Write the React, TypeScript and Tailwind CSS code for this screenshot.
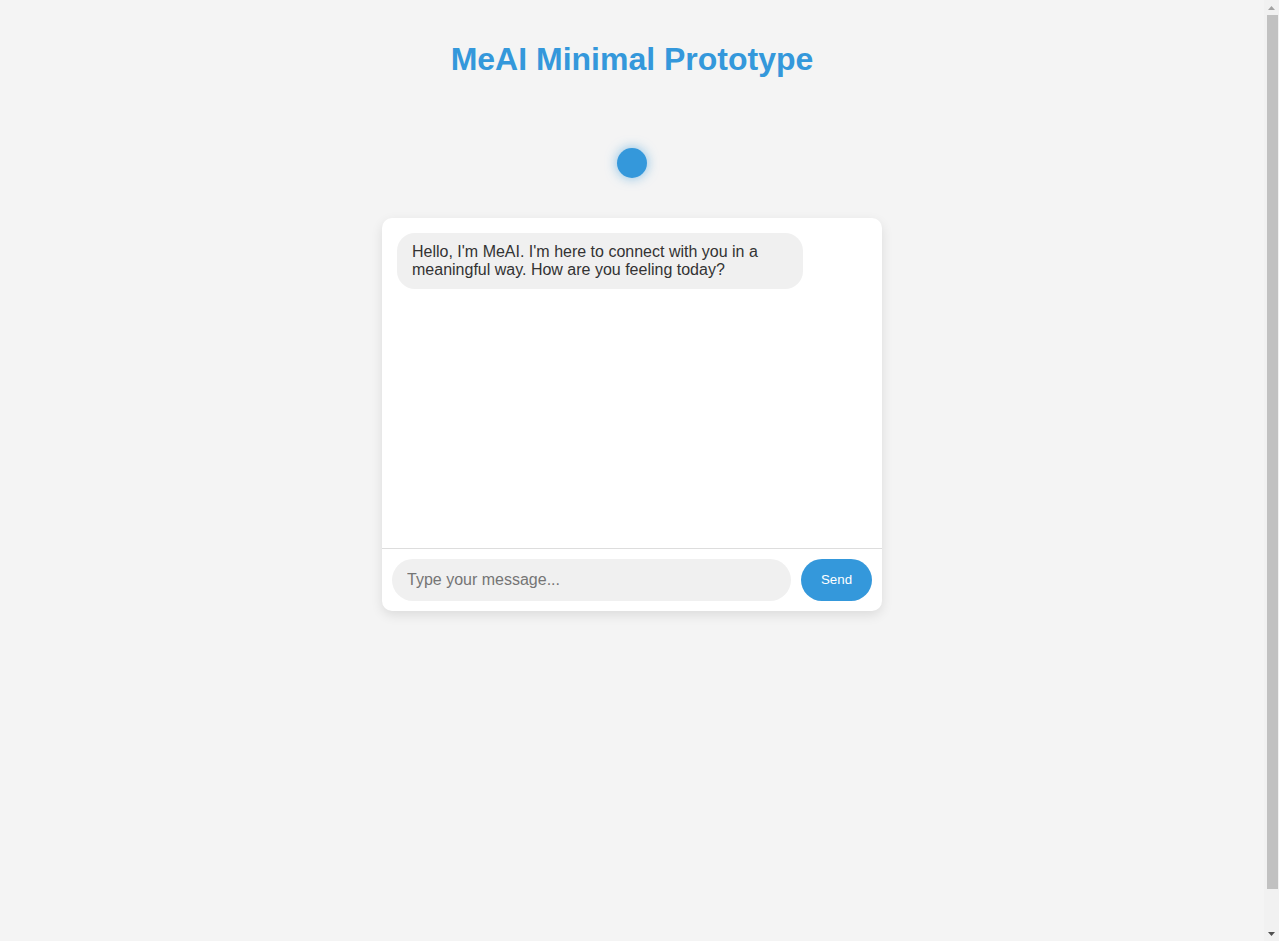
import { useState } from "react";

type Msg = { from: "ai" | "user"; text: string };

function ScrollTrack() {
  // static look of the page scrollbar seen in the screenshot
  return (
    <div className="w-[15px] h-screen shrink-0 bg-[#f1f1f1] flex flex-col items-center">
      <div className="h-[15px] flex items-center justify-center">
        <svg width="7" height="4" viewBox="0 0 7 4">
          <path d="M3.5 0 L7 4 L0 4 Z" fill="#a3a3a3" />
        </svg>
      </div>
      <div className="w-[11px] h-[874px] ml-[1px] bg-[#c1c1c1]" />
      <div className="flex-1" />
      <div className="h-[15px] flex items-center justify-center">
        <svg width="7" height="4" viewBox="0 0 7 4">
          <path d="M0 0 L7 0 L3.5 4 Z" fill="#505050" />
        </svg>
      </div>
    </div>
  );
}

export default function App() {
  const [messages, setMessages] = useState<Msg[]>([
    {
      from: "ai",
      text: "Hello, I'm MeAI. I'm here to connect with you in a meaningful way. How are you feeling today?",
    },
  ]);
  const [draft, setDraft] = useState("");

  const send = () => {
    if (!draft.trim()) return;
    setMessages([...messages, { from: "user", text: draft }]);
    setDraft("");
  };

  return (
    <div className="flex h-screen overflow-hidden bg-[#f4f4f4]">
      <div className="flex-1 h-screen overflow-y-auto">
        <div className="box-content min-h-screen p-5 flex flex-col items-center font-['Liberation_Sans',Arial,sans-serif] text-[#333]">
          <h1 className="my-[21.44px] text-[32px] leading-[36.8px] font-bold text-[#3498db]">
            MeAI Minimal Prototype
          </h1>

          <div className="mt-[48px] mb-[40px] w-[30px] h-[30px] rounded-full bg-[#3498db] shadow-[0_0_12px_rgba(52,152,219,0.6)]" />

          <div className="w-[500px] bg-white rounded-[10px] shadow-[0_4px_12px_rgba(0,0,0,0.1)] flex flex-col overflow-hidden">
            <div className="h-[330px] p-[15px] overflow-y-auto flex flex-col gap-2.5">
              {messages.map((m, i) => (
                <div
                  key={i}
                  className={
                    m.from === "ai"
                      ? "self-start box-content max-w-[376px] px-[15px] py-[10px] rounded-[18px] bg-[#f0f0f0] text-[16px] leading-[18.4px]"
                      : "self-end box-content max-w-[376px] px-[15px] py-[10px] rounded-[18px] bg-[#3498db] text-white text-[16px] leading-[18.4px]"
                  }
                >
                  {m.text}
                </div>
              ))}
            </div>
            <div className="border-t border-[#ddd] p-2.5 flex gap-2.5">
              <input
                value={draft}
                onChange={(e) => setDraft(e.target.value)}
                onKeyDown={(e) => e.key === "Enter" && send()}
                placeholder="Type your message..."
                className="flex-1 h-[42px] px-[15px] rounded-[21px] bg-[#f0f0f0] text-[16px] outline-none placeholder:text-[#757575]"
              />
              <button
                onClick={send}
                className="h-[42px] w-[71px] rounded-[21px] bg-[#3498db] text-white text-[13.33px]"
              >
                Send
              </button>
            </div>
          </div>
        </div>
      </div>
      <ScrollTrack />
    </div>
  );
}
